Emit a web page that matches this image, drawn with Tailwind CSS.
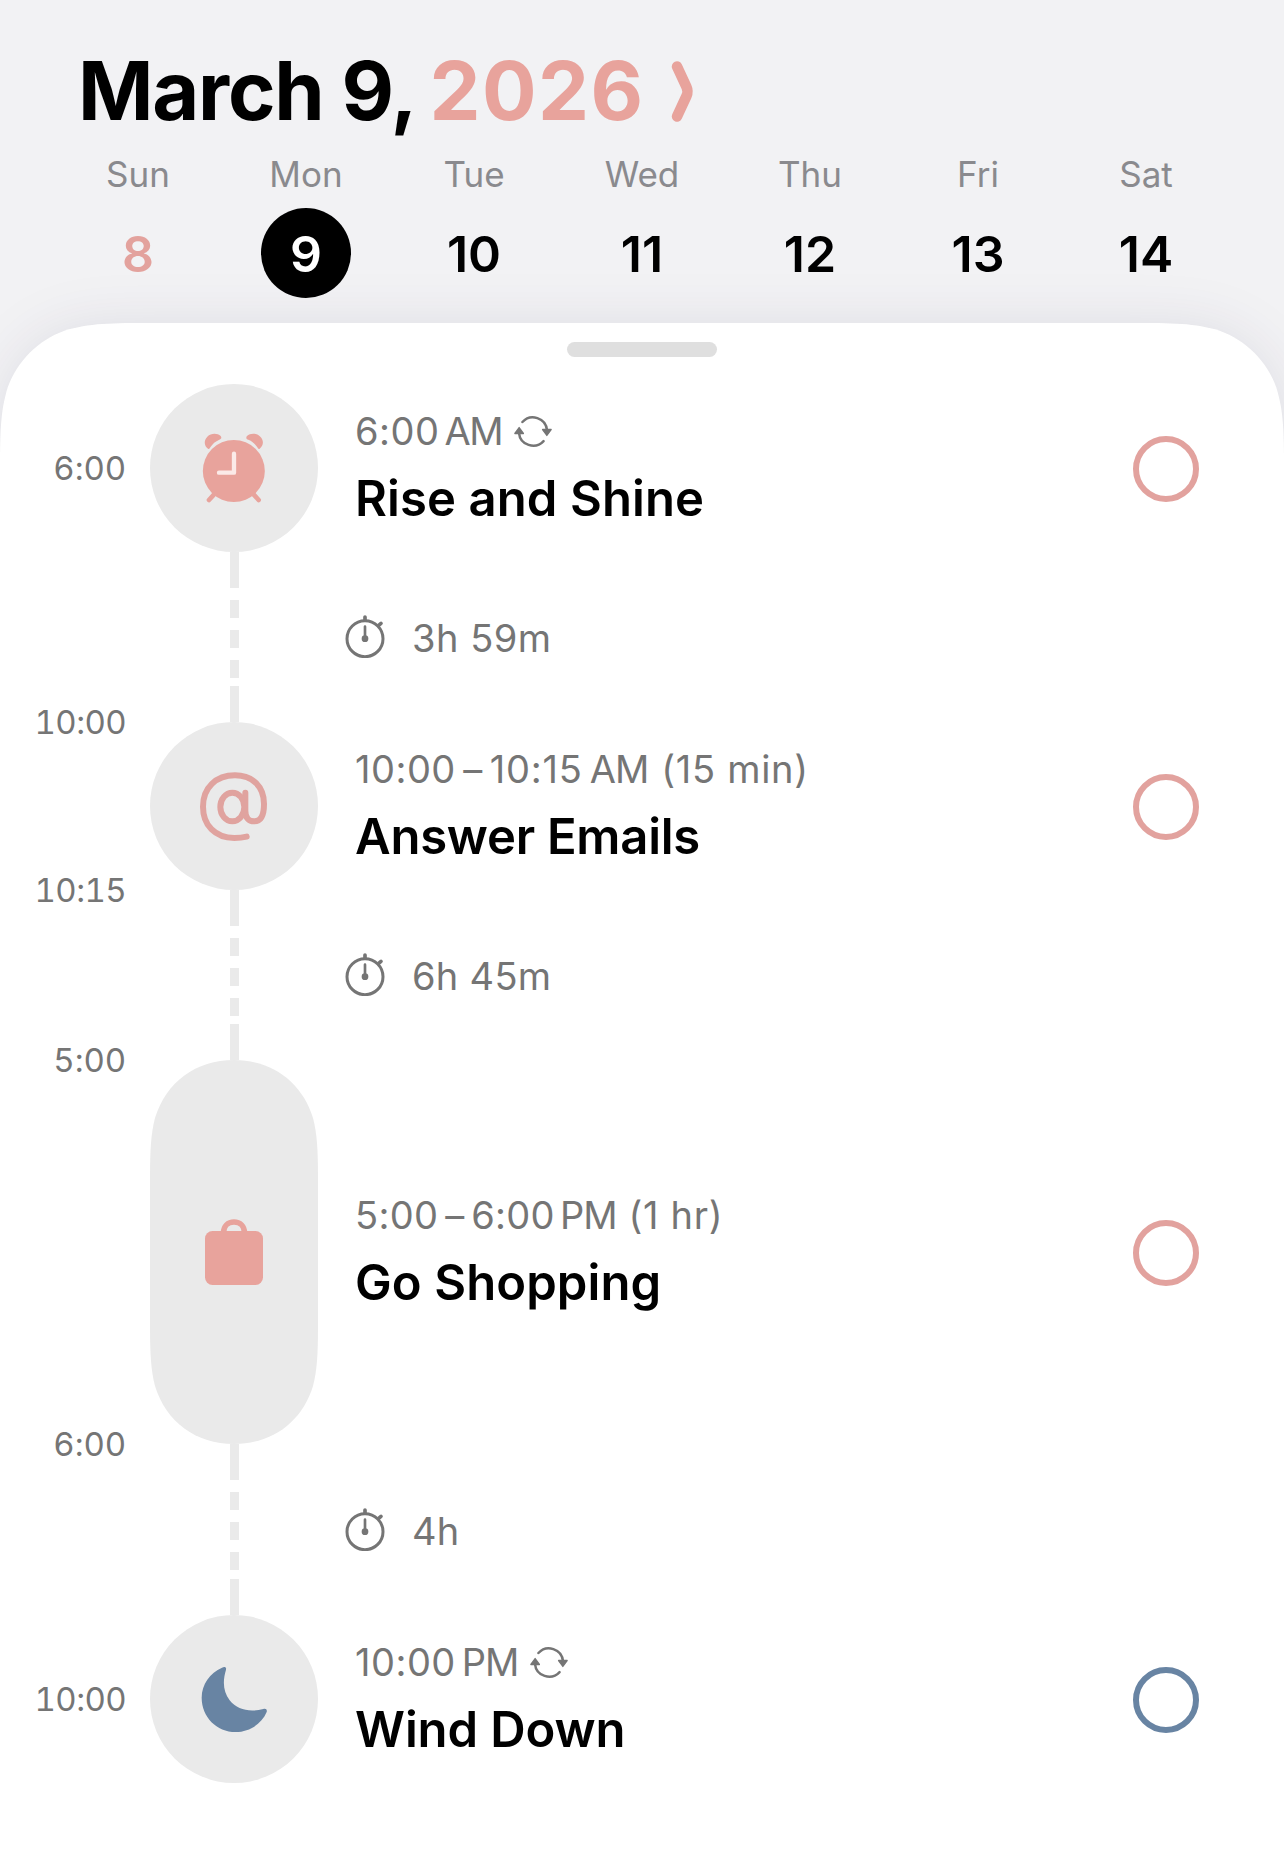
<!DOCTYPE html>
<html lang="en">
<head>
    <meta charset="UTF-8">
    <meta name="viewport" content="width=device-width, initial-scale=1.0">
    <title>Day Planner - March 9, 2026</title>
    <script src="https://cdn.jsdelivr.net/npm/@tailwindcss/browser@4"></script>
    <style>
        body { font-family: Inter, 'Liberation Sans', sans-serif; }
    </style>
</head>
<body class="bg-[#f2f2f4] h-[1874px] overflow-hidden flex flex-col">

    <!-- Shared icons -->
    <svg class="hidden">
        <symbol id="icon-repeat" viewBox="521 30 120 100">
            <path d="M549 51.3 A43 43 0 0 1 623.5 76 M613 109 A43 43 0 0 1 538.5 84" fill="none" stroke="currentColor" stroke-width="7.5" stroke-linecap="round"/>
            <path d="M610 74 H636 L623 92 Z M526 86 H552 L539 68 Z" fill="currentColor" stroke="currentColor" stroke-width="4" stroke-linejoin="round"/>
        </symbol>
        <symbol id="icon-timer" viewBox="0 0 126 132">
            <circle cx="63" cy="74" r="54" fill="none" stroke="currentColor" stroke-width="9"/>
            <path d="M63 38 V74" stroke="currentColor" stroke-width="8" stroke-linecap="round"/>
            <circle cx="63" cy="74" r="10" fill="currentColor"/>
            <path d="M63 9 V18 M104 34 L111 28" stroke="currentColor" stroke-width="11" stroke-linecap="round"/>
        </symbol>
    </svg>

    <header class="h-[323px] shrink-0">
        <div class="pt-[50px] pl-[78px] flex items-center">
            <h1 class="flex text-[81px] leading-[82px] font-bold">
                <span class="tracking-[-1.2px] text-black">March 9,</span>
                <span class="ml-[13px] tracking-[1.5px] text-[#e8a39c]">2026</span>
            </h1>
            <svg class="ml-[21px] w-[32px] h-[70px]" viewBox="666 55 32 70" fill="none" stroke="#e8a39c" stroke-width="10.5" stroke-linecap="round">
                <path d="M677 65.5 L686.5 86 Q688.5 90.5 686.5 95 L677 115.5"/>
            </svg>
        </div>

        <!-- Week strip -->
        <div class="mt-[20px] ml-[54px] w-[1176px] grid grid-cols-7 text-center text-[50px] font-semibold text-black">
            <div class="flex flex-col items-center">
                <span class="text-[35px] leading-[44px] font-normal text-[#8a8a8e]">Sun</span>
                <span class="mt-[12px] size-[90px] leading-[93px] text-[#e3a29d]">8</span>
            </div>
            <div class="flex flex-col items-center">
                <span class="text-[35px] leading-[44px] font-normal text-[#8a8a8e]">Mon</span>
                <span class="mt-[12px] size-[90px] leading-[93px] rounded-full bg-black text-white">9</span>
            </div>
            <div class="flex flex-col items-center">
                <span class="text-[35px] leading-[44px] font-normal text-[#8a8a8e]">Tue</span>
                <span class="mt-[12px] size-[90px] leading-[93px]">10</span>
            </div>
            <div class="flex flex-col items-center">
                <span class="text-[35px] leading-[44px] font-normal text-[#8a8a8e]">Wed</span>
                <span class="mt-[12px] size-[90px] leading-[93px]">11</span>
            </div>
            <div class="flex flex-col items-center">
                <span class="text-[35px] leading-[44px] font-normal text-[#8a8a8e]">Thu</span>
                <span class="mt-[12px] size-[90px] leading-[93px]">12</span>
            </div>
            <div class="flex flex-col items-center">
                <span class="text-[35px] leading-[44px] font-normal text-[#8a8a8e]">Fri</span>
                <span class="mt-[12px] size-[90px] leading-[93px]">13</span>
            </div>
            <div class="flex flex-col items-center">
                <span class="text-[35px] leading-[44px] font-normal text-[#8a8a8e]">Sat</span>
                <span class="mt-[12px] size-[90px] leading-[93px]">14</span>
            </div>
        </div>
    </header>

    <!-- Sheet -->
    <main class="relative flex-1">
        <svg class="absolute top-0 left-0 w-[1284px] h-[1551px] overflow-visible drop-shadow-[0_0_26px_rgba(30,20,80,0.09)]" viewBox="0 0 1284 1551">
            <path fill="#fff" d="M0 1551 V156 C0 111 0 89 7.7 64.4 C17.3 38 38 17.3 64.4 7.7 C89 0 111 0 156 0 H1128 C1173 0 1195 0 1219.6 7.7 C1246 17.3 1266.7 38 1276.3 64.4 C1284 89 1284 111 1284 156 V1551 Z"/>
        </svg>

        <div class="relative flex flex-col">
            <div class="mt-[19px] mx-auto w-[150px] h-[15px] rounded-full bg-[#dfdfdf]"></div>

            <!-- Rise and Shine -->
            <section class="mt-[27px] h-[168px] flex items-center">
                <div class="w-[126px] pt-[2px] text-right text-[33px] tabular-nums tracking-[-0.1px] text-[#757575]">6:00</div>
                <div class="ml-[24px] size-[168px] rounded-full bg-[#eaeaea] flex items-center justify-center">
                    <svg class="size-[90px]" viewBox="-3 9 270 270">
                        <g fill="#e8a39c">
                            <circle cx="131.5" cy="153" r="93"/>
                            <path d="M54 86 C42 77 41 61 52 50 C63 39 82 39 92 48 C96 53 94 57 88 59 C76 64 68 71 61 82 C59 87 56 88 54 86 Z"/>
                            <path d="M209 86 C221 77 222 61 211 50 C200 39 181 39 171 48 C167 53 169 57 175 59 C187 64 195 71 202 82 C204 87 207 88 209 86 Z"/>
                        </g>
                        <path d="M75 220 L57 240 M188 220 L206 240" stroke="#e8a39c" stroke-width="14" stroke-linecap="round"/>
                        <path d="M132 101 V158 H87" fill="none" stroke="#fbeae8" stroke-width="13" stroke-linecap="round" stroke-linejoin="round"/>
                    </svg>
                </div>
                <div class="ml-[37px] flex-1">
                    <p class="h-[60px] flex items-center text-[38px] text-[#757575]">
                        <span class="tracking-[0.5px]">6:00</span><span class="ml-[5px] tracking-[-1.5px]">AM</span>
                        <svg class="ml-[11px] w-[40px] h-[33px]"><use href="#icon-repeat"/></svg>
                    </p>
                    <h2 class="pt-[2px] text-[49px] leading-[72px] font-semibold tracking-[0.1px] text-black">Rise and Shine</h2>
                </div>
                <div class="mr-[85px] mt-[2px] size-[66px] rounded-full border-[6px] border-[#e2a29e]"></div>
            </section>

            <div class="h-[170px] flex items-center">
                <div class="ml-[230px] w-[9px] h-full flex flex-col">
                    <i class="h-[36px] bg-[#eaeaea]"></i>
                    <i class="mt-[12px] h-[18px] bg-[#eaeaea]"></i>
                    <i class="mt-[12px] h-[18px] bg-[#eaeaea]"></i>
                    <i class="mt-[12px] h-[18px] bg-[#eaeaea]"></i>
                    <i class="mt-auto h-[36px] bg-[#eaeaea]"></i>
                </div>
                <svg class="ml-[105px] mb-[2px] w-[42px] h-[44px] text-[#757575]"><use href="#icon-timer"/></svg>
                <span class="ml-[26px] mt-[2px] text-[38px] tracking-[0.5px] text-[#757575]">3h 59m</span>
            </div>

            <!-- Answer Emails -->
            <section class="h-[168px] flex items-center">
                <div class="w-[126px] h-full flex flex-col justify-between text-right text-[33px] tabular-nums tracking-[-0.6px] text-[#757575]">
                    <span class="h-0 leading-[0px]">10:00</span>
                    <span class="h-0 leading-[0px]">10:15</span>
                </div>
                <div class="ml-[24px] size-[168px] rounded-full bg-[#eaeaea] flex items-center justify-center">
                    <svg class="size-[90px]" viewBox="567 213 270 270" fill="none" stroke="#e0a39f" stroke-width="18" stroke-linecap="round">
                        <path d="M740 440 C728 443 716 444 703 444 C645 444 609 405 609 350 C609 293 648 256 705 256 C758 256 792 290 792 342 C792 376 782 394 763 394 C745 394 736 382 736 362 V308"/>
                        <ellipse cx="697" cy="351" rx="36" ry="43"/>
                    </svg>
                </div>
                <div class="ml-[37px] flex-1">
                    <p class="h-[60px] flex items-center text-[38px] text-[#757575]">
                        <span class="tracking-[0.5px]">10:00</span><span class="w-[34px] text-center">–</span><span class="tracking-[0.8px]">10:15</span><span class="ml-[7px] tracking-[-1px]">AM</span><span class="ml-[13px] tracking-[0.7px]">(15 min)</span>
                    </p>
                    <h2 class="pt-[2px] text-[49px] leading-[72px] font-semibold tracking-[-0.25px] text-black">Answer Emails</h2>
                </div>
                <div class="mr-[85px] mt-[2px] size-[66px] rounded-full border-[6px] border-[#e2a29e]"></div>
            </section>

            <div class="h-[170px] flex items-center">
                <div class="ml-[230px] w-[9px] h-full flex flex-col">
                    <i class="h-[36px] bg-[#eaeaea]"></i>
                    <i class="mt-[12px] h-[18px] bg-[#eaeaea]"></i>
                    <i class="mt-[12px] h-[18px] bg-[#eaeaea]"></i>
                    <i class="mt-[12px] h-[18px] bg-[#eaeaea]"></i>
                    <i class="mt-auto h-[36px] bg-[#eaeaea]"></i>
                </div>
                <svg class="ml-[105px] mb-[2px] w-[42px] h-[44px] text-[#757575]"><use href="#icon-timer"/></svg>
                <span class="ml-[26px] mt-[2px] text-[38px] tracking-[0.3px] text-[#757575]">6h 45m</span>
            </div>

            <!-- Go Shopping -->
            <section class="h-[384px] flex items-center">
                <div class="w-[126px] h-full flex flex-col justify-between text-right text-[33px] tabular-nums tracking-[-0.1px] text-[#757575]">
                    <span class="h-0 leading-[0px]">5:00</span>
                    <span class="h-0 leading-[0px]">6:00</span>
                </div>
                <svg class="ml-[24px] w-[168px] h-[384px]" viewBox="0 0 168 384">
                    <path fill="#eaeaea" d="M84 0 C122 0 152 22 163 58 C167 73 168 90 168 118 V266 C168 294 167 311 163 326 C152 362 122 384 84 384 C46 384 16 362 5 326 C1 311 0 294 0 266 V118 C0 90 1 73 5 58 C16 22 46 0 84 0 Z"/>
                    <rect x="55" y="171" width="58" height="54" rx="7.5" fill="#e8a39c"/>
                    <path d="M73.5 173 C73.5 166 78 162 84 162 C90 162 94.5 166 94.5 173" fill="none" stroke="#e8a39c" stroke-width="5.6"/>
                </svg>
                <div class="ml-[37px] flex-1">
                    <p class="h-[60px] flex items-center text-[38px] text-[#757575]">
                        <span class="tracking-[0.3px]">5:00</span><span class="w-[33px] text-center">–</span><span class="tracking-[0.3px]">6:00</span><span class="ml-[5px] tracking-[-1px]">PM</span><span class="ml-[12px] tracking-[0.7px]">(1 hr)</span>
                    </p>
                    <h2 class="pt-[2px] text-[49px] leading-[72px] font-semibold tracking-[0.1px] text-black">Go Shopping</h2>
                </div>
                <div class="mr-[85px] mt-[2px] size-[66px] rounded-full border-[6px] border-[#e2a29e]"></div>
            </section>

            <div class="h-[171px] flex items-center">
                <div class="ml-[230px] w-[9px] h-full flex flex-col">
                    <i class="h-[36px] bg-[#eaeaea]"></i>
                    <i class="mt-[12px] h-[18px] bg-[#eaeaea]"></i>
                    <i class="mt-[12px] h-[18px] bg-[#eaeaea]"></i>
                    <i class="mt-[12px] h-[18px] bg-[#eaeaea]"></i>
                    <i class="mt-auto h-[36px] bg-[#eaeaea]"></i>
                </div>
                <svg class="ml-[105px] mb-[2px] w-[42px] h-[44px] text-[#757575]"><use href="#icon-timer"/></svg>
                <span class="ml-[26px] mt-[3px] text-[38px] tracking-[0.2px] text-[#757575]">4h</span>
            </div>

            <!-- Wind Down -->
            <section class="h-[168px] flex items-center">
                <div class="w-[126px] pt-[2px] text-right text-[33px] tabular-nums tracking-[-0.6px] text-[#757575]">10:00</div>
                <div class="ml-[24px] size-[168px] rounded-full bg-[#eaeaea] flex items-center justify-center">
                    <svg class="size-[90px]" viewBox="567 762 270 270">
                        <path fill="#6884a3" d="M666 803 C673 799 680 801 678 809 C667 846 670 876 689 901 C712 930 750 938 790 927 C798 925 802 929 800 936 C785 972 748 996 707 996 C650 996 605 951 605 893 C605 853 630 819 666 803 Z"/>
                    </svg>
                </div>
                <div class="ml-[37px] flex-1">
                    <p class="h-[60px] flex items-center text-[38px] text-[#757575]">
                        <span class="tracking-[0.5px]">10:00</span><span class="ml-[6px] tracking-[-1px]">PM</span>
                        <svg class="ml-[11px] w-[40px] h-[33px]"><use href="#icon-repeat"/></svg>
                    </p>
                    <h2 class="pt-[2px] text-[49px] leading-[72px] font-semibold tracking-[-0.1px] text-black">Wind Down</h2>
                </div>
                <div class="mr-[85px] mt-[2px] size-[66px] rounded-full border-[6px] border-[#6884a3]"></div>
            </section>
        </div>
    </main>
</body>
</html>
